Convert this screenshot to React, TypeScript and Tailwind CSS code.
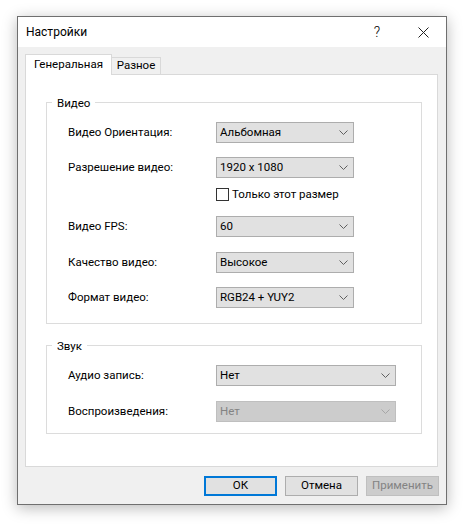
import { ReactNode } from 'react';

const FONT = "font-['Roboto','Noto_Sans',sans-serif]";

function Chevron({ disabled }: { disabled?: boolean }) {
  return (
    <svg width="9" height="5" viewBox="0 0 9 5" className="shrink-0">
      <path
        d="M0.5 0.5 L4.5 4.5 L8.5 0.5"
        fill="none"
        stroke={disabled ? '#a6a6a6' : '#606060'}
        strokeWidth="1"
      />
    </svg>
  );
}

function Combo({
  value,
  width,
  disabled,
}: {
  value: string;
  width: string;
  disabled?: boolean;
}) {
  return (
    <div
      className={`${width} h-[21px] flex items-center justify-between pl-[3px] pr-[5px] border ${
        disabled
          ? 'bg-[#cccccc] border-[#bfbfbf] text-[#838383]'
          : 'bg-[#e1e1e1] border-[#adadad] text-black'
      }`}
    >
      <span>{value}</span>
      <Chevron disabled={disabled} />
    </div>
  );
}

function Row({
  label,
  className = '',
  children,
}: {
  label: string;
  className?: string;
  children: ReactNode;
}) {
  return (
    <div className={`flex items-center pl-[21px] ${className}`}>
      <span className="w-[148px] shrink-0">{label}</span>
      {children}
    </div>
  );
}

function Group({
  title,
  className = '',
  children,
}: {
  title: string;
  className?: string;
  children: ReactNode;
}) {
  return (
    <div className={`relative ml-[20px] w-[376px] border border-[#dcdcdc] ${className}`}>
      {/* legend on the top border */}
      <span className="absolute -top-[8px] left-[5px] bg-white px-[5px] leading-[16px]">
        {title}
      </span>
      {children}
    </div>
  );
}

export default function App() {
  return (
    <div className={`w-[468px] h-[527px] bg-white pt-[16px] pl-[17px] text-[11.5px] text-black ${FONT}`}>
      <div className="w-[430px] h-[489px] border border-[#6f6f6f] bg-[#f0f0f0] flex flex-col shadow-[0_3px_14px_rgba(0,0,0,0.28)]">
        {/* Title bar */}
        <div className="h-[30px] bg-white flex items-center shrink-0">
          <span className="pl-[8px] flex-1 text-[12px]">Настройки</span>
          <div className="w-[46px] h-full flex items-center justify-center text-[14px] font-light">?</div>
          <div className="w-[46px] h-full flex items-center justify-center">
            <svg width="11" height="11" viewBox="0 0 11 11">
              <path d="M0.5 0.5 L10.5 10.5 M10.5 0.5 L0.5 10.5" stroke="#222" strokeWidth="1" />
            </svg>
          </div>
        </div>

        {/* Tabs */}
        <div className="flex items-end pt-[7px] pl-[7px]">
          <div className="relative z-10 -mb-[1px] w-[87px] h-[21px] bg-white border border-b-0 border-[#d9d9d9] flex items-center justify-center">
            Генеральная
          </div>
          <div className="w-[49px] h-[17px] bg-[#f0f0f0] border-t border-r border-[#d9d9d9] flex items-center justify-center">
            Разное
          </div>
        </div>

        {/* Tab panel */}
        <div className="ml-[7px] w-[413px] h-[393px] bg-white border border-[#d9d9d9]">
          <Group title="Видео" className="mt-[27px] h-[222px]">
            <Row label="Видео Ориентация:" className="mt-[19px]">
              <Combo value="Альбомная" width="w-[138px]" />
            </Row>
            <Row label="Разрешение видео:" className="mt-[14px]">
              <Combo value="1920 x 1080" width="w-[138px]" />
            </Row>
            <div className="flex items-center mt-[10px] pl-[169px] h-[13px]">
              <div className="w-[13px] h-[13px] border border-[#333333] bg-white shrink-0" />
              <span className="ml-[3px]">Только этот размер</span>
            </div>
            <Row label="Видео FPS:" className="mt-[15px]">
              <Combo value="60" width="w-[138px]" />
            </Row>
            <Row label="Качество видео:" className="mt-[15px]">
              <Combo value="Высокое" width="w-[138px]" />
            </Row>
            <Row label="Формат видео:" className="mt-[14px]">
              <Combo value="RGB24 + YUY2" width="w-[138px]" />
            </Row>
          </Group>

          <Group title="Звук" className="mt-[21px] h-[89px]">
            <Row label="Аудио запись:" className="mt-[19px]">
              <Combo value="Нет" width="w-[180px]" />
            </Row>
            <Row label="Воспроизведения:" className="mt-[15px]">
              <Combo value="Нет" width="w-[180px]" disabled />
            </Row>
          </Group>
        </div>

        {/* Buttons */}
        <div className="flex justify-end gap-[8px] pr-[7px] mt-[9px]">
          <button className="w-[73px] h-[20px] bg-[#e1e1e1] border-2 border-[#0078d7] flex items-center justify-center">
            ОК
          </button>
          <button className="w-[73px] h-[20px] bg-[#e1e1e1] border border-[#adadad] flex items-center justify-center">
            Отмена
          </button>
          <button className="w-[73px] h-[20px] bg-[#cccccc] border border-[#bfbfbf] text-[#838383] flex items-center justify-center">
            Применить
          </button>
        </div>
      </div>
    </div>
  );
}
